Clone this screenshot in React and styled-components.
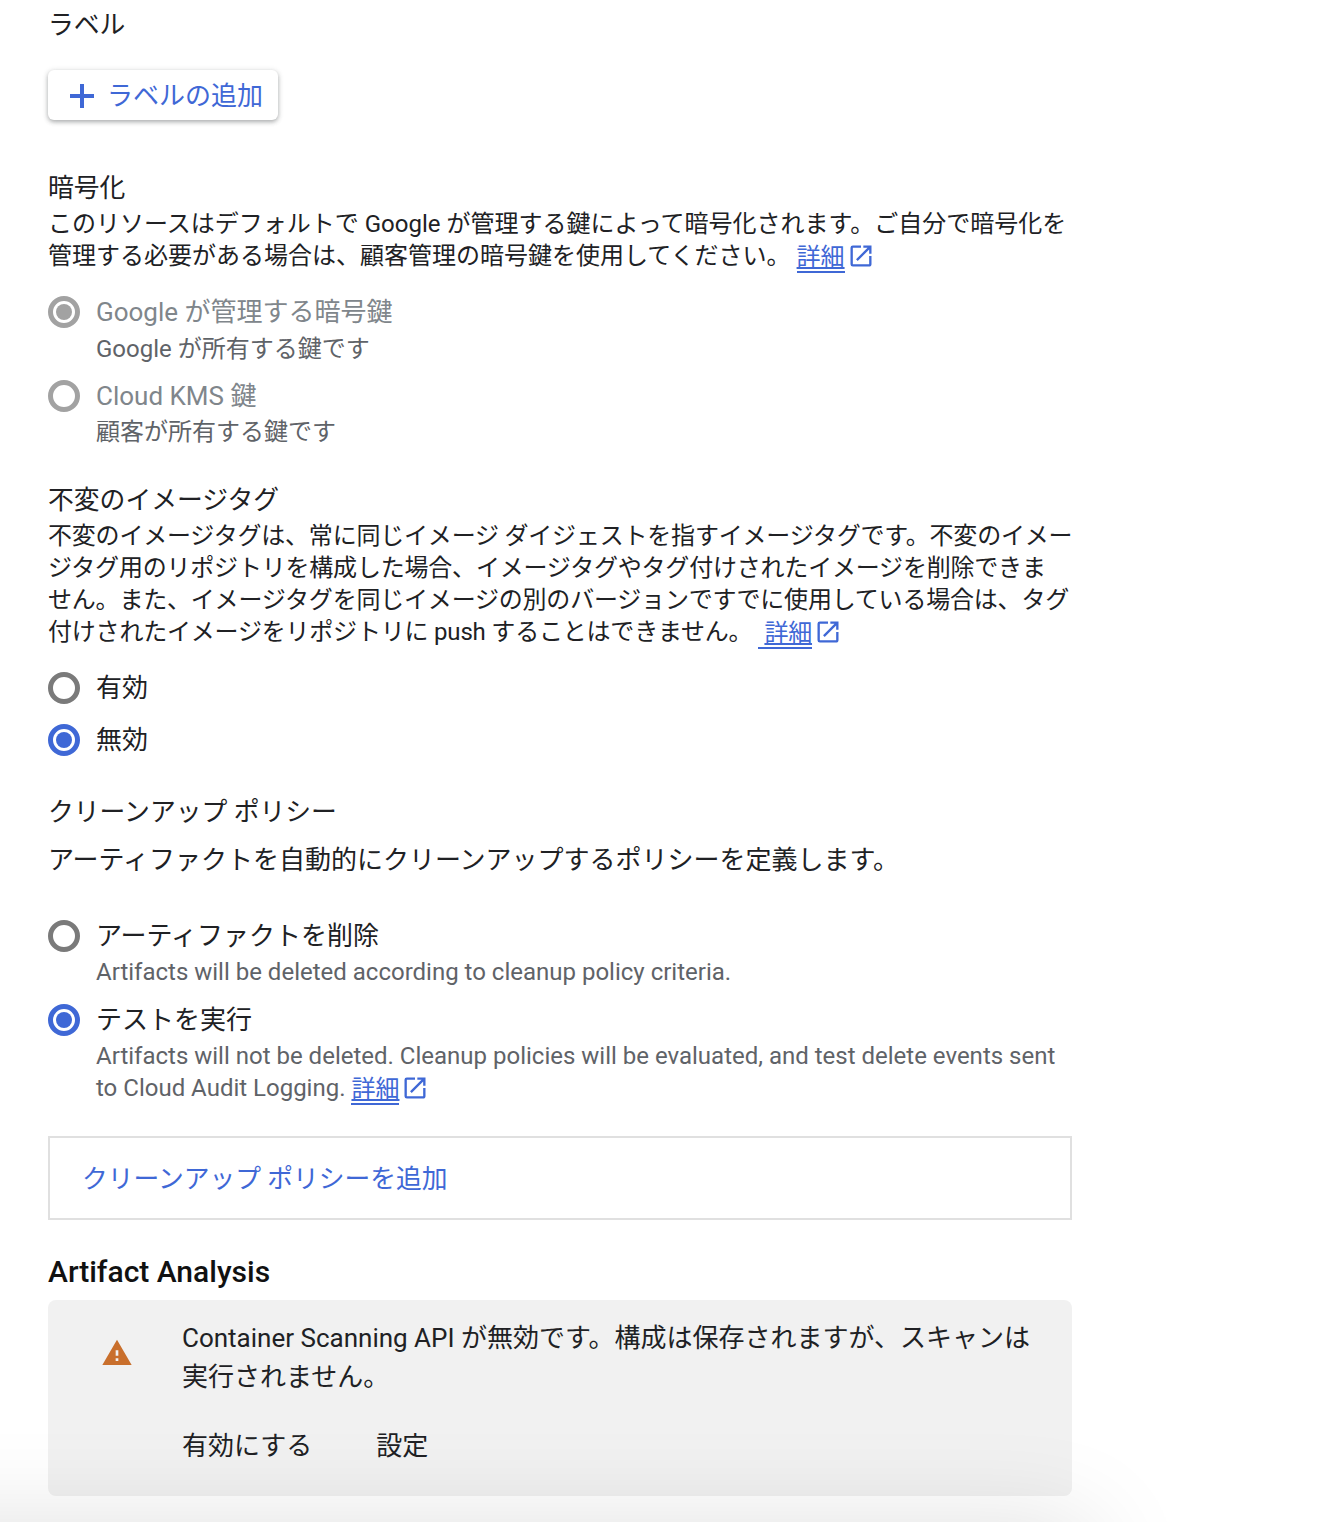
import React from "react";
import styled, { createGlobalStyle } from "styled-components";

const blue = "#3f68d6";

const GlobalStyle = createGlobalStyle`
  html, body {
    margin: 0;
    padding: 0;
    background: #fff;
  }
  body {
    height: 1522px;
    overflow: hidden;
    font-family: Roboto, "Noto Sans CJK JP", sans-serif;
    color: #202124;
  }
`;

const Page = styled.main`
  position: relative;
  width: 1320px;
  height: 1522px;
  overflow: hidden;
  box-sizing: border-box;
  padding: 9px 0 0 48px;
`;

const Column = styled.div`
  width: 1024px;
`;

const SectionTitle = styled.div`
  font-size: 25.8px;
  line-height: 32px;
  margin-top: ${(p) => p.$top || 0}px;
`;

const PolicyIntro = styled.p`
  margin: 16px 0 0;
  font-size: 26px;
  line-height: 32px;
`;

const AddButton = styled.button`
  display: flex;
  align-items: center;
  gap: 13px;
  width: 230px;
  height: 50px;
  margin-top: 29px;
  padding: 2px 0 0 22px;
  box-sizing: border-box;
  border: 0;
  border-radius: 6px;
  background: #fff;
  box-shadow: 0 2px 4px rgba(60, 64, 67, 0.35), 0 1px 6px rgba(60, 64, 67, 0.15);
  color: ${blue};
  font: inherit;
  font-size: 26px;
`;

const ButtonLabel = styled.span`
  padding-bottom: 6px;
`;

const Body = styled.p`
  margin: ${(p) => p.$top || 0}px 0 0;
  font-size: 24px;
  line-height: 32px;
  white-space: nowrap;
  letter-spacing: ${(p) => (p.$tight ? "-0.2px" : "0")};
`;

const Learn = styled.a`
  display: inline-flex;
  align-items: center;
  height: 32px;
  vertical-align: top;
  margin-left: ${(p) => p.$gap || 0}px;
  color: ${blue};
`;

const LearnText = styled.span`
  height: 26px;
  margin-top: 6px;
  line-height: 24px;
  border-bottom: 2px solid ${blue};
  padding-left: ${(p) => p.$pad || 0}px;
  margin-right: 2px;
`;

const RadioRow = styled.label`
  display: flex;
  align-items: center;
  gap: 16px;
  margin-top: ${(p) => p.$top || 0}px;
  font-size: 26px;
  line-height: 32px;
  color: ${(p) => (p.$disabled ? "#80868b" : "#202124")};
`;

const ringColor = (p) => {
  if (p.$disabled) return "#a2a2a2";
  return p.$checked ? blue : "#7a7a7a";
};

const Radio = styled.span`
  display: flex;
  align-items: center;
  justify-content: center;
  flex: none;
  width: 32px;
  height: 32px;
  box-sizing: border-box;
  border: 5px solid ${ringColor};
  border-radius: 50%;

  &::after {
    content: "";
    display: ${(p) => (p.$checked ? "block" : "none")};
    width: 16px;
    height: 16px;
    border-radius: 50%;
    background: ${ringColor};
  }
`;

const Hint = styled.div`
  margin: ${(p) => p.$top || 0}px 0 0 48px;
  font-size: 24px;
  line-height: 32px;
  color: #5f6368;
`;

const AddPolicy = styled.div`
  display: flex;
  align-items: center;
  height: 84px;
  box-sizing: border-box;
  margin-top: 32px;
  padding: 0 0 4px 32px;
  border: 2px solid #e0e0e0;
  color: ${blue};
  font-size: 25.75px;
`;

const AnalysisTitle = styled.h2`
  margin: 36px 0 0;
  font-size: 30px;
  font-weight: 500;
  line-height: 32px;
  color: #111;
`;

const Notice = styled.section`
  display: flex;
  height: 196px;
  box-sizing: border-box;
  margin-top: 12px;
  padding: 19px 24px 0 53px;
  border-radius: 8px;
  background: #f1f1f1;
`;

const NoticeIcon = styled.svg`
  flex: none;
  width: 32px;
  height: 32px;
  margin-top: 18px;
  fill: #c96f2c;
`;

const NoticeBody = styled.div`
  margin-left: 49px;
  font-size: 26px;
  line-height: 39px;
`;

const Actions = styled.div`
  display: flex;
  gap: 64px;
  margin-top: 30px;
`;

const BottomBar = styled.div`
  position: absolute;
  left: -200px;
  top: 1525px;
  width: 1290px;
  height: 200px;
  box-shadow: 0 0 100px rgba(0, 0, 0, 0.13);
`;

const PlusIcon = () => (
  <svg width="24" height="24" viewBox="0 0 24 24" fill={blue}>
    <rect x="0" y="10" width="24" height="4" />
    <rect x="10" y="0" width="4" height="24" />
  </svg>
);

const OpenIcon = () => (
  <svg width="28" height="28" viewBox="0 0 24 24" fill={blue}>
    <path d="M19 19H5V5h7V3H5a2 2 0 0 0-2 2v14a2 2 0 0 0 2 2h14c1.1 0 2-.9 2-2v-7h-2v7zM14 3v2h3.59l-9.83 9.83 1.41 1.41L19 6.41V10h2V3h-7z" />
  </svg>
);

const LearnMore = ({ pad, gap }) => (
  <Learn href="#" $gap={gap}>
    <LearnText $pad={pad}>詳細</LearnText>
    <OpenIcon />
  </Learn>
);

const Option = ({ label, top, checked, disabled }) => (
  <RadioRow $top={top} $disabled={disabled}>
    <Radio $checked={checked} $disabled={disabled} />
    {label}
  </RadioRow>
);

const App = () => (
  <Page>
    <GlobalStyle />
    <Column>
      <SectionTitle>ラベル</SectionTitle>
      <AddButton>
        <PlusIcon />
        <ButtonLabel>ラベルの追加</ButtonLabel>
      </AddButton>

      <SectionTitle $top={52}>暗号化</SectionTitle>
      <Body $top={4}>
        このリソースはデフォルトで Google が管理する鍵によって暗号化されます。ご自分で暗号化を
        <br />
        管理する必要がある場合は、顧客管理の暗号鍵を使用してください。
        <LearnMore gap={6} />
      </Body>
      <Option label="Google が管理する暗号鍵" top={24} checked disabled />
      <Hint $top={5}>Google が所有する鍵です</Hint>
      <Option label="Cloud KMS 鍵" top={15} disabled />
      <Hint $top={4}>顧客が所有する鍵です</Hint>

      <SectionTitle $top={36}>不変のイメージタグ</SectionTitle>
      <Body $top={4} $tight>
        不変のイメージタグは、常に同じイメージ ダイジェストを指すイメージタグです。不変のイメー
        <br />
        ジタグ用のリポジトリを構成した場合、イメージタグやタグ付けされたイメージを削除できま
        <br />
        せん。また、イメージタグを同じイメージの別のバージョンですでに使用している場合は、タグ
        <br />
        付けされたイメージをリポジトリに push することはできません。
        <LearnMore pad={6} gap={6} />
      </Body>
      <Option label="有効" top={24} />
      <Option label="無効" top={20} checked />

      <SectionTitle $top={40}>クリーンアップ ポリシー</SectionTitle>
      <PolicyIntro>アーティファクトを自動的にクリーンアップするポリシーを定義します。</PolicyIntro>
      <Option label="アーティファクトを削除" top={44} />
      <Hint $top={4}>Artifacts will be deleted according to cleanup policy criteria.</Hint>
      <Option label="テストを実行" top={16} checked />
      <Hint $top={4}>
        Artifacts will not be deleted. Cleanup policies will be evaluated, and test delete events sent to Cloud Audit Logging. <LearnMore />
      </Hint>

      <AddPolicy>クリーンアップ ポリシーを追加</AddPolicy>

      <AnalysisTitle>Artifact Analysis</AnalysisTitle>
      <Notice>
        <NoticeIcon viewBox="0 0 24 24">
          <path d="M1 21h22L12 2 1 21zm12-3h-2v-2h2v2zm0-4h-2v-4h2v4z" />
        </NoticeIcon>
        <NoticeBody>
          Container Scanning API が無効です。構成は保存されますが、スキャンは実行されません。
          <Actions>
            <span>有効にする</span>
            <span>設定</span>
          </Actions>
        </NoticeBody>
      </Notice>
    </Column>
    <BottomBar />
  </Page>
);

export default App;
